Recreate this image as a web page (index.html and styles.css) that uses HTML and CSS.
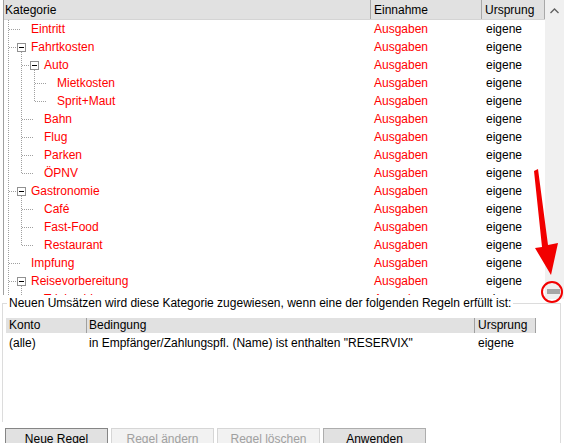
FILE: index.html
```html
<!DOCTYPE html>
<html lang="de">
<head>
    <meta charset="UTF-8">
    <meta name="viewport" content="width=device-width, initial-scale=1.0">
    <title>Kategorie - Regeln</title>
    <link rel="stylesheet" href="styles.css">
</head>
<body>
    <div class="tree-panel">
        <div class="tree-list">
            <div class="tree-head">
                <div class="col-cat">Kategorie</div>
                <div class="col-in">Einnahme</div>
                <div class="col-src">Ursprung</div>
            </div>

            <div class="tree-row">
                <div class="col-cat"><span class="g tee"></span><span class="node"></span><span class="label">Eintritt</span></div>
                <div class="col-in red">Ausgaben</div>
                <div class="col-src">eigene</div>
            </div>
            <div class="tree-row">
                <div class="col-cat"><span class="g tee"></span><span class="node open"><span class="box"></span></span><span class="label">Fahrtkosten</span></div>
                <div class="col-in red">Ausgaben</div>
                <div class="col-src">eigene</div>
            </div>
            <div class="tree-row">
                <div class="col-cat"><span class="g line"></span><span class="g tee"></span><span class="node open"><span class="box"></span></span><span class="label">Auto</span></div>
                <div class="col-in red">Ausgaben</div>
                <div class="col-src">eigene</div>
            </div>
            <div class="tree-row">
                <div class="col-cat"><span class="g line"></span><span class="g line"></span><span class="g tee"></span><span class="node"></span><span class="label">Mietkosten</span></div>
                <div class="col-in red">Ausgaben</div>
                <div class="col-src">eigene</div>
            </div>
            <div class="tree-row">
                <div class="col-cat"><span class="g line"></span><span class="g line"></span><span class="g end"></span><span class="node"></span><span class="label">Sprit+Maut</span></div>
                <div class="col-in red">Ausgaben</div>
                <div class="col-src">eigene</div>
            </div>
            <div class="tree-row">
                <div class="col-cat"><span class="g line"></span><span class="g tee"></span><span class="node"></span><span class="label">Bahn</span></div>
                <div class="col-in red">Ausgaben</div>
                <div class="col-src">eigene</div>
            </div>
            <div class="tree-row">
                <div class="col-cat"><span class="g line"></span><span class="g tee"></span><span class="node"></span><span class="label">Flug</span></div>
                <div class="col-in red">Ausgaben</div>
                <div class="col-src">eigene</div>
            </div>
            <div class="tree-row">
                <div class="col-cat"><span class="g line"></span><span class="g tee"></span><span class="node"></span><span class="label">Parken</span></div>
                <div class="col-in red">Ausgaben</div>
                <div class="col-src">eigene</div>
            </div>
            <div class="tree-row">
                <div class="col-cat"><span class="g line"></span><span class="g end"></span><span class="node"></span><span class="label">ÖPNV</span></div>
                <div class="col-in red">Ausgaben</div>
                <div class="col-src">eigene</div>
            </div>
            <div class="tree-row">
                <div class="col-cat"><span class="g tee"></span><span class="node open"><span class="box"></span></span><span class="label">Gastronomie</span></div>
                <div class="col-in red">Ausgaben</div>
                <div class="col-src">eigene</div>
            </div>
            <div class="tree-row">
                <div class="col-cat"><span class="g line"></span><span class="g tee"></span><span class="node"></span><span class="label">Café</span></div>
                <div class="col-in red">Ausgaben</div>
                <div class="col-src">eigene</div>
            </div>
            <div class="tree-row">
                <div class="col-cat"><span class="g line"></span><span class="g tee"></span><span class="node"></span><span class="label">Fast-Food</span></div>
                <div class="col-in red">Ausgaben</div>
                <div class="col-src">eigene</div>
            </div>
            <div class="tree-row">
                <div class="col-cat"><span class="g line"></span><span class="g end"></span><span class="node"></span><span class="label">Restaurant</span></div>
                <div class="col-in red">Ausgaben</div>
                <div class="col-src">eigene</div>
            </div>
            <div class="tree-row">
                <div class="col-cat"><span class="g tee"></span><span class="node"></span><span class="label">Impfung</span></div>
                <div class="col-in red">Ausgaben</div>
                <div class="col-src">eigene</div>
            </div>
            <div class="tree-row">
                <div class="col-cat"><span class="g tee"></span><span class="node open"><span class="box"></span></span><span class="label">Reisevorbereitung</span></div>
                <div class="col-in red">Ausgaben</div>
                <div class="col-src">eigene</div>
            </div>
            <div class="tree-row">
                <div class="col-cat"><span class="g line"></span><span class="g tee"></span><span class="node"></span><span class="label">Trinkgeld</span></div>
                <div class="col-in red">Ausgaben</div>
                <div class="col-src">eigene</div>
            </div>
        </div>
        <div class="scrollbar">
            <svg class="arrow-up" width="9" height="6" viewBox="0 0 9 6"><path d="M0.5 5 L4.5 1 L8.5 5" fill="none" stroke="#606060" stroke-width="1.3"/></svg>
            <div class="thumb"></div>
        </div>
    </div>

    <fieldset class="rules">
        <legend>Neuen Umsätzen wird diese Kategorie zugewiesen, wenn eine der folgenden Regeln erfüllt ist:</legend>
        <div class="rule-table">
            <div class="rule-head">
                <div class="c-konto">Konto</div>
                <div class="c-cond">Bedingung</div>
                <div class="c-src">Ursprung</div>
            </div>
            <div class="rule-row">
                <div class="c-konto">(alle)</div>
                <div class="c-cond">in Empfänger/Zahlungspfl. (Name) ist enthalten "RESERVIX"</div>
                <div class="c-src">eigene</div>
            </div>
        </div>
    </fieldset>

    <div class="buttons">
        <button class="btn default">Neue Regel</button>
        <button class="btn" disabled>Regel ändern</button>
        <button class="btn" disabled>Regel löschen</button>
        <button class="btn">Anwenden</button>
    </div>

    <!-- annotation drawn on top of the screenshot -->
    <svg class="marker" width="564" height="443" viewBox="0 0 564 443">
        <polygon points="534,171 538,169 548,245 558,243 551,275 535,248 542,247" fill="#f20000"/>
        <circle cx="552" cy="292" r="10" fill="none" stroke="#f20000" stroke-width="2"/>
    </svg>
</body>
</html>
```

FILE: styles.css
```css
body {
    margin: 0;
    width: 564px;
    height: 443px;
    overflow: hidden;
    position: relative;
    font-family: "Liberation Sans", Arial, sans-serif;
    font-size: 12px;
    color: #000;
    background-color: #fff;
}
.red {
    color: #ff0000;
}

/* category tree */
.tree-panel {
    display: flex;
    align-items: flex-start;
    height: 296px;
    margin-left: 3px;
}
.tree-list {
    width: 541px;
    height: 295px;
    overflow: hidden;
    border-left: 1px solid #a0a0a0;
}
.tree-head {
    display: flex;
    height: 20px;
    background-color: #e1e1e1;
    border-bottom: 1px solid #d4d4d4;
    box-sizing: border-box;
}
.tree-head > div {
    padding-top: 2px;
    line-height: 17px;
    border-right: 1px solid #a8a8a8;
    box-sizing: border-box;
}
.tree-head .col-cat {
    padding-left: 1px;
}
.tree-head .col-in,
.tree-head .col-src {
    padding-left: 3px;
}
.col-cat {
    width: 367px;
    flex: none;
}
.col-in {
    width: 111px;
    flex: none;
    box-sizing: border-box;
}
.col-src {
    width: 63px;
    flex: none;
    box-sizing: border-box;
}
.tree-row {
    display: flex;
    height: 18px;
    line-height: 18px;
    white-space: nowrap;
}
.tree-row .col-cat {
    display: flex;
}
.tree-row .col-in {
    padding-left: 3px;
}
.tree-row .col-src {
    padding-left: 4px;
}
.label {
    padding-left: 1px;
    color: #ff0000;
}

/* dotted guide lines */
.g, .node {
    position: relative;
    width: 13px;
    height: 18px;
    flex: none;
}
.g::before {
    content: "";
    position: absolute;
    left: 4px;
    top: 0;
    width: 1px;
    height: 18px;
    background: repeating-linear-gradient(to bottom, #a0a0a0 0 1px, transparent 1px 2px);
}
.g.end::before {
    height: 10px;
}
.tee::after, .end::after {
    content: "";
    position: absolute;
    left: 5px;
    top: 9px;
    width: 12px;
    height: 1px;
    background: repeating-linear-gradient(to right, #a0a0a0 0 1px, transparent 1px 2px);
}
.node.open::after {
    content: "";
    position: absolute;
    left: 4px;
    top: 14px;
    width: 1px;
    height: 4px;
    background: repeating-linear-gradient(to bottom, #a0a0a0 0 1px, transparent 1px 2px);
}
.box {
    position: absolute;
    left: 0;
    top: 5px;
    width: 9px;
    height: 9px;
    box-sizing: border-box;
    border: 1px solid #919191;
    background-color: #fff;
    z-index: 1;
}
.box::before {
    content: "";
    position: absolute;
    left: 1px;
    top: 3px;
    width: 5px;
    height: 1px;
    background-color: #000;
}

.scrollbar {
    width: 19px;
    height: 299px;
    flex: none;
    background-color: #f0f0f0;
    display: flex;
    flex-direction: column;
    justify-content: space-between;
    align-items: flex-start;
}
.arrow-up {
    margin: 8px 0 0 5px;
}
.thumb {
    width: 13px;
    height: 5px;
    margin: 0 0 5px 2px;
    background-color: #a6a6a6;
}

/* rule group */
.rules {
    margin: 0 0 0 2px;
    padding: 0 0 0 4px;
    width: 559px;
    height: 126px;
    box-sizing: border-box;
    border: 1px solid #dcdcdc;
    border-bottom: none;
}
.rules legend {
    padding: 0 2px;
    line-height: 14px;
}
.rule-table {
    margin: 8px 0 0 -1px;
    width: 530px;
}
.rule-head, .rule-row {
    display: flex;
    white-space: nowrap;
}
.rule-head {
    height: 15px;
    line-height: 15px;
    background-color: #e1e1e1;
}
.rule-head > div {
    border-right: 1px solid #a0a0a0;
}
.rule-row {
    padding-top: 1px;
    line-height: 18px;
}
.c-konto {
    width: 81px;
    padding-left: 3px;
    box-sizing: border-box;
}
.c-cond {
    width: 388px;
    padding-left: 2px;
    box-sizing: border-box;
}
.c-src {
    width: 61px;
    padding-left: 3px;
    box-sizing: border-box;
}

/* buttons */
.buttons {
    display: flex;
    gap: 3px;
    width: 561px;
    height: 30px;
    padding: 6px 0 0 5px;
    box-sizing: border-box;
    border-right: 1px solid #dcdcdc;
}
.btn {
    width: 103px;
    height: 21px;
    padding: 0;
    font-family: "Liberation Sans", Arial, sans-serif;
    font-size: 12px;
    color: #000;
    background-color: #e1e1e1;
    border: 1px solid #adadad;
}
.btn.default {
    border-color: #858585;
}
.btn:disabled {
    color: #a0a0a0;
    background-color: #f2f2f2;
    border-color: #d6d6d6;
}

.marker {
    position: absolute;
    left: 0;
    top: 0;
    pointer-events: none;
}
```
